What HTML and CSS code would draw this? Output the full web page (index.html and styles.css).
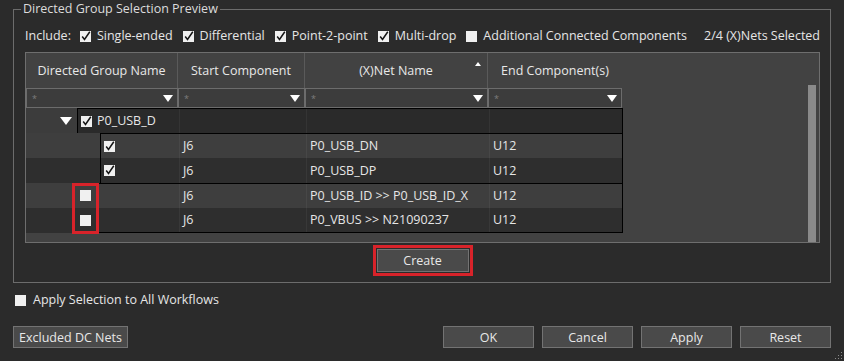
FILE: index.html
```html
<!DOCTYPE html>
<html lang="en">
<head>
  <meta charset="UTF-8">
  <title>Directed Group Selection</title>
  <link rel="stylesheet" href="styles.css">
</head>
<body>

  <div class="dialog">
    <fieldset class="group">
      <legend>Directed Group Selection Preview</legend>

      <div class="include">
        <span class="include-label">Include:</span>
        <label class="opt"><span class="cb on"><svg viewBox="0 0 11 11"><path d="M2.2 5.6 L4.5 8.4 L9.8 0.8"/></svg></span>Single-ended</label>
        <label class="opt"><span class="cb on"><svg viewBox="0 0 11 11"><path d="M2.2 5.6 L4.5 8.4 L9.8 0.8"/></svg></span>Differential</label>
        <label class="opt"><span class="cb on"><svg viewBox="0 0 11 11"><path d="M2.2 5.6 L4.5 8.4 L9.8 0.8"/></svg></span>Point-2-point</label>
        <label class="opt"><span class="cb on"><svg viewBox="0 0 11 11"><path d="M2.2 5.6 L4.5 8.4 L9.8 0.8"/></svg></span>Multi-drop</label>
        <label class="opt"><span class="cb"></span>Additional Connected Components</label>
        <span class="count">2/4 (X)Nets Selected</span>
      </div>

      <div class="grid">
        <div class="head">
          <div class="hcell c1">Directed Group Name</div>
          <div class="hcell c2">Start Component</div>
          <div class="hcell c3">(X)Net Name<span class="sort"></span></div>
          <div class="hcell c4">End Component(s)</div>
        </div>

        <div class="filters">
          <div class="fcell c1"><span class="star">*</span><span class="drop"></span></div>
          <div class="fcell c2"><span class="star">*</span><span class="drop"></span></div>
          <div class="fcell c3"><span class="star">*</span><span class="drop"></span></div>
          <div class="fcell c4"><span class="star">*</span><span class="drop"></span></div>
        </div>

        <div class="rows">
          <div class="row parent">
            <div class="lead"><span class="arrow"></span></div>
            <div class="body">
              <div class="cell name"><span class="cb on"><svg viewBox="0 0 11 11"><path d="M2.2 5.6 L4.5 8.4 L9.8 0.8"/></svg></span>P0_USB_D</div>
              <div class="cell"></div>
              <div class="cell"></div>
              <div class="cell"></div>
            </div>
          </div>

          <div class="row child light first">
            <div class="lead"></div>
            <div class="body">
              <div class="cell name"><span class="cb on"><svg viewBox="0 0 11 11"><path d="M2.2 5.6 L4.5 8.4 L9.8 0.8"/></svg></span></div>
              <div class="cell">J6</div>
              <div class="cell">P0_USB_DN</div>
              <div class="cell">U12</div>
            </div>
          </div>

          <div class="row child dark">
            <div class="lead"></div>
            <div class="body">
              <div class="cell name"><span class="cb on"><svg viewBox="0 0 11 11"><path d="M2.2 5.6 L4.5 8.4 L9.8 0.8"/></svg></span></div>
              <div class="cell">J6</div>
              <div class="cell">P0_USB_DP</div>
              <div class="cell">U12</div>
            </div>
          </div>

          <div class="row single light first">
            <div class="lead"><span class="cb"></span></div>
            <div class="body">
              <div class="cell name"></div>
              <div class="cell">J6</div>
              <div class="cell">P0_USB_ID &gt;&gt; P0_USB_ID_X</div>
              <div class="cell">U12</div>
            </div>
          </div>

          <div class="row single dark last">
            <div class="lead"><span class="cb"></span></div>
            <div class="body">
              <div class="cell name"></div>
              <div class="cell">J6</div>
              <div class="cell">P0_VBUS &gt;&gt; N21090237</div>
              <div class="cell">U12</div>
            </div>
          </div>

          <div class="mark"></div>
        </div>

        <div class="scroll"></div>
      </div>

      <div class="actions">
        <div class="highlight"><button class="btn create">Create</button></div>
      </div>
    </fieldset>

    <label class="apply"><span class="cb"></span>Apply Selection to All Workflows</label>

    <div class="footer">
      <button class="btn excluded">Excluded DC Nets</button>
      <div class="main-buttons">
        <button class="btn">OK</button>
        <button class="btn">Cancel</button>
        <button class="btn">Apply</button>
        <button class="btn">Reset</button>
      </div>
    </div>

    <svg class="grip" viewBox="0 0 8 8"><rect x="6" y="0" width="1" height="1"/><rect x="3" y="3" width="1" height="1"/><rect x="6" y="3" width="1" height="1"/><rect x="0" y="6" width="1" height="1"/><rect x="3" y="6" width="1" height="1"/><rect x="6" y="6" width="1" height="1"/></svg>
  </div>

</body>
</html>
```

FILE: styles.css
```css
body {
  margin: 0;
  background: #2b2b2b;
  color: #e6e6e6;
  font-family: "Open Sans", "Noto Sans", sans-serif;
  font-size: 12.5px;
  line-height: 18px;
}

.dialog {
  position: relative;
  height: 361px;
  padding: 0 13px;
  box-sizing: border-box;
}

/* group box */
.group {
  margin: 0;
  padding: 9px 10px 6px 11px;
  border: 1px solid #6c6c6c;
  min-inline-size: 0;
}

.group legend {
  margin-left: -4px;
  padding: 0 2px;
  color: #dcdcdc;
  line-height: 18px;
}

.include {
  display: flex;
  align-items: center;
  height: 18px;
}

.include-label {
  margin-right: 9px;
}

.opt {
  display: flex;
  align-items: center;
  margin-right: 10px;
}

.opt .cb {
  margin-right: 6px;
}

.count {
  margin-left: auto;
}

/* checkbox */
.cb {
  display: inline-block;
  width: 11px;
  height: 11px;
  background: #f0f0f0;
  flex: none;
}

.cb svg {
  display: block;
  width: 11px;
  height: 11px;
  overflow: visible;
}

.cb svg path {
  fill: none;
  stroke: #151515;
  stroke-width: 1.5;
}

/* table */
.grid {
  position: relative;
  margin-top: 7px;
  height: 191px;
  box-sizing: border-box;
  border: 1px solid #6e6e6e;
  background: #424242;
}

.c1 { width: 152px; }
.c2 { width: 127px; }
.c3 { width: 183px; }
.c4 { width: 134px; }

.head {
  display: flex;
  height: 35px;
}

.hcell {
  position: relative;
  display: flex;
  align-items: center;
  justify-content: center;
  box-sizing: border-box;
  border-right: 1px solid #5a5a5a;
  color: #e8e8e8;
}

.hcell.c4 {
  border-right: none;
}

.sort {
  position: absolute;
  right: 6px;
  top: 9px;
  border-left: 3px solid transparent;
  border-right: 3px solid transparent;
  border-bottom: 4px solid #fff;
}

.filters {
  display: flex;
  height: 20px;
}

.fcell {
  display: flex;
  align-items: center;
  justify-content: space-between;
  box-sizing: border-box;
  padding: 0 4px 0 5px;
  border: 1px solid #6c6c6c;
  background: #3c3c3c;
}

.star {
  color: #7c7c7c;
  font-size: 9px;
  line-height: 10px;
  margin-top: 2px;
}

.drop {
  border-left: 5px solid transparent;
  border-right: 5px solid transparent;
  border-top: 7px solid #fff;
}

.rows {
  position: relative;
  width: 597px;
}

.row {
  display: flex;
  height: 25px;
  box-sizing: border-box;
}

.row .lead {
  display: flex;
  align-items: center;
  flex: none;
}

.row .body {
  flex: 1;
  display: grid;
  grid-template-columns: 1fr 127px 183px 133px;
  border-left: 1px solid #000;
  border-right: 1px solid #000;
}

.row.parent .lead {
  width: 51px;
  padding-left: 34px;
  box-sizing: border-box;
  background: #3c3c3c;
}

.row.parent .body {
  background: #2a2a2a;
  border-top: 1px solid #000;
}

.row.child .lead {
  width: 74px;
}

.row.single .lead {
  width: 72px;
  padding-left: 54px;
  box-sizing: border-box;
}

.row.light { background: #3e3e3e; }
.row.dark { background: #2e2e2e; }

.row.first .body { border-top: 1px solid #000; }
.row.last .body { border-bottom: 1px solid #000; }

.arrow {
  border-left: 6px solid transparent;
  border-right: 6px solid transparent;
  border-top: 8px solid #fff;
}

.cell {
  display: flex;
  align-items: center;
  padding-left: 3px;
  border-left: 1px solid rgba(255, 255, 255, 0.05);
  white-space: nowrap;
  overflow: hidden;
}

.cell.name {
  border-left: none;
  padding-left: 3px;
}

.cell.name .cb {
  margin-right: 5px;
}

.mark {
  position: absolute;
  left: 46px;
  top: 75px;
  width: 27px;
  height: 51px;
  box-sizing: border-box;
  border: 3px solid #d8232a;
}

.scroll {
  position: absolute;
  left: 782px;
  top: 32px;
  bottom: 0;
  width: 8px;
  background: #8a8a8a;
}

/* buttons */
.actions {
  display: flex;
  justify-content: center;
  margin-top: 2px;
}

.highlight {
  padding: 1px;
  border: 3px solid #d8232a;
}

.btn {
  display: block;
  height: 22px;
  padding: 0;
  border: 1px solid #737373;
  background: #4a4a4a;
  color: #e8e8e8;
  font-family: inherit;
  font-size: 12.5px;
}

.btn.create {
  width: 92px;
  height: 23px;
}

.apply {
  display: flex;
  align-items: center;
  margin: 8px 0 0 2px;
}

.apply .cb {
  margin-right: 7px;
}

.footer {
  display: flex;
  justify-content: space-between;
  margin-top: 17px;
}

.btn.excluded {
  width: 115px;
}

.main-buttons {
  display: flex;
  gap: 8px;
}

.main-buttons .btn {
  width: 91px;
}

.grip {
  position: absolute;
  right: 1px;
  bottom: 1px;
  width: 8px;
  height: 8px;
  fill: #8a8a8a;
}
```
